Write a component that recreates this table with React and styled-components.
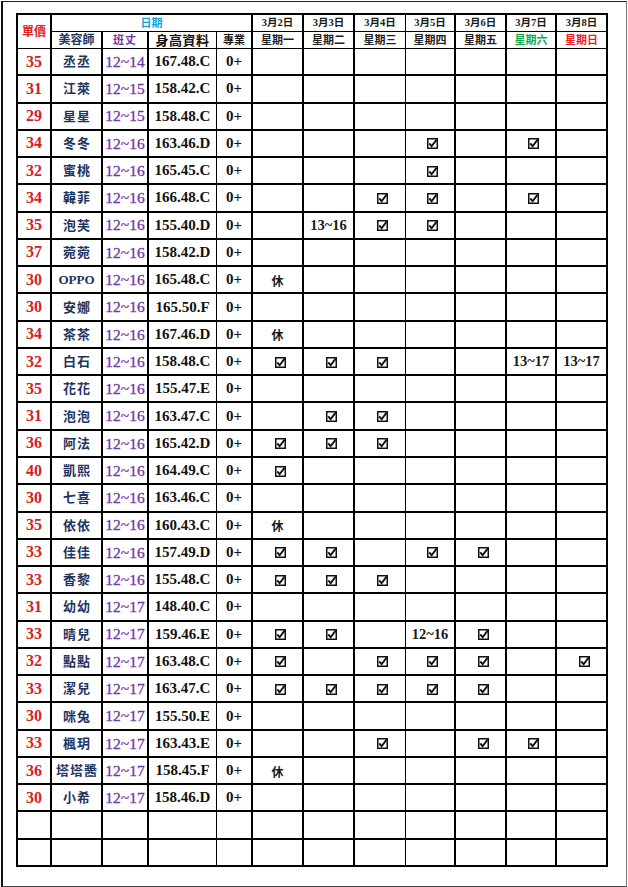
import React from 'react';
import styled, { createGlobalStyle } from 'styled-components';

const GlobalStyle = createGlobalStyle`
  html, body { margin: 0; padding: 0; background: #fff; }
  body { font-family: "Liberation Serif", "Noto Sans CJK TC", serif; }
`;

const Frame = styled.div`
  box-sizing: border-box;
  width: 626px;
  height: 886px;
  margin: 1px 0 0 1px;
  border-top: 1px solid #222;
  border-left: 2px solid #111;
  border-right: 1px solid #777;
  border-bottom: 1px solid #444;
  padding: 11px 0 0 13px;
`;

const Sheet = styled.div`
  display: grid;
  box-sizing: border-box;
  width: 592px;
  grid-template-columns: 34px 51px 46px 68px 36px 51px 51px 51px 50px 51px 50px 51px;
  grid-template-rows: 17px 17px;
  grid-auto-rows: 27.27px;
  border-top: 2px solid #000;
  border-left: 2px solid #000;
`;

const Cell = styled.div`
  box-sizing: border-box;
  display: flex;
  align-items: center;
  justify-content: center;
  min-width: 0;
  overflow: hidden;
  white-space: nowrap;
  border-right: ${(p) => p.$r}px solid #000;
  border-bottom: ${(p) => p.$b}px solid #000;
  grid-column: ${(p) => (p.$span ? `span ${p.$span}` : 'auto')};
  grid-row: ${(p) => (p.$rows ? `span ${p.$rows}` : 'auto')};
`;

const HeadLabel = styled.span`
  font-family: "Liberation Serif", "Noto Sans CJK TC", serif;
  font-weight: 700;
  font-size: ${(p) => p.$size || 11}px;
  color: ${(p) => p.$color || '#1a1a1a'};
  line-height: 1;
  letter-spacing: ${(p) => p.$ls || 0}px;
`;

const Price = styled.span`
  font-family: "Liberation Serif", serif;
  font-weight: 700;
  font-size: 16px;
  color: #d6201f;
  line-height: 1;
`;

const Name = styled.span`
  font-family: "Liberation Serif", "Noto Sans CJK TC", serif;
  font-weight: 700;
  font-size: 13px;
  letter-spacing: ${(p) => (p.$latin ? 0 : 1)}px;
  margin-left: ${(p) => (p.$latin ? 0 : 1)}px;
  color: #1f3561;
  line-height: 1;
`;

const Shift = styled.span`
  font-family: "Liberation Serif", serif;
  font-weight: 400;
  font-size: 15.5px;
  color: #7536a4;
  line-height: 1;
  -webkit-text-stroke: 0.3px #7536a4;
`;

const Measure = styled.span`
  font-family: "Liberation Serif", serif;
  font-weight: 700;
  font-size: 15px;
  color: #111;
  line-height: 1;
`;

const Level = styled.span`
  font-family: "Liberation Serif", serif;
  font-weight: 700;
  font-size: 15px;
  color: #111;
  line-height: 1;
`;

const Note = styled.span`
  font-family: "Liberation Serif", serif;
  font-weight: 700;
  font-size: 14.5px;
  color: #1a1a1a;
  line-height: 1;
`;

const Rest = styled.span`
  font-family: "Noto Sans CJK TC", sans-serif;
  font-weight: 700;
  font-size: 12px;
  color: #1a1a1a;
  line-height: 1;
  margin-top: 2px;
`;

const CheckIcon = styled.svg`
  display: block;
  width: 11px;
  height: 11px;
  margin-left: 5px;
  margin-top: 1px;
`;

const CheckBox = () => (
  <CheckIcon viewBox="0 0 11 11">
    <rect x="0.75" y="0.75" width="9.5" height="9.5" fill="none" stroke="#111" strokeWidth="1.5" />
    <path d="M2.3 5.4 L4.6 8.3 L9.6 1.6" fill="none" stroke="#111" strokeWidth="1.9" strokeLinejoin="miter" />
  </CheckIcon>
);

const colRight = [2, 2, 2, 1, 2, 2, 2, 1, 2, 2, 2, 2];

const V = 'v';
const R = '休';

const days = [
  { d: '3月2日', w: '星期一', c: '#222' },
  { d: '3月3日', w: '星期二', c: '#222' },
  { d: '3月4日', w: '星期三', c: '#222' },
  { d: '3月5日', w: '星期四', c: '#222' },
  { d: '3月6日', w: '星期五', c: '#222' },
  { d: '3月7日', w: '星期六', c: '#13a64b' },
  { d: '3月8日', w: '星期日', c: '#ec1c24' },
];

const rows = [
  [35, '丞丞', '12~14', '167.48.C', []],
  [31, '江萊', '12~15', '158.42.C', []],
  [29, '星星', '12~15', '158.48.C', []],
  [34, '冬冬', '12~16', '163.46.D', ['', '', '', V, '', V, '']],
  [32, '蜜桃', '12~16', '165.45.C', ['', '', '', V]],
  [34, '韓菲', '12~16', '166.48.C', ['', '', V, V, '', V]],
  [35, '泡芙', '12~16', '155.40.D', ['', '13~16', V, V]],
  [37, '菀菀', '12~16', '158.42.D', []],
  [30, 'OPPO', '12~16', '165.48.C', [R]],
  [30, '安娜', '12~16', '165.50.F', []],
  [34, '茶茶', '12~16', '167.46.D', [R]],
  [32, '白石', '12~16', '158.48.C', [V, V, V, '', '', '13~17', '13~17']],
  [35, '花花', '12~16', '155.47.E', []],
  [31, '泡泡', '12~16', '163.47.C', ['', V, V]],
  [36, '阿法', '12~16', '165.42.D', [V, V, V]],
  [40, '凱熙', '12~16', '164.49.C', [V]],
  [30, '七喜', '12~16', '163.46.C', []],
  [35, '依依', '12~16', '160.43.C', [R]],
  [33, '佳佳', '12~16', '157.49.D', [V, V, '', V, V]],
  [33, '香黎', '12~16', '155.48.C', [V, V, V]],
  [31, '幼幼', '12~17', '148.40.C', []],
  [33, '晴兒', '12~17', '159.46.E', [V, V, '', '12~16', V]],
  [32, '點點', '12~17', '163.48.C', [V, '', V, V, V, '', V]],
  [33, '潔兒', '12~17', '163.47.C', [V, V, V, V, V]],
  [30, '咪兔', '12~17', '155.50.E', []],
  [33, '楓玥', '12~17', '163.43.E', ['', '', V, '', V, V]],
  [36, '塔塔醬', '12~17', '158.45.F', [R]],
  [30, '小希', '12~17', '158.46.D', []],
  null,
  null,
];

const Mark = ({ value }) => {
  if (!value) return null;
  if (value === V) return <CheckBox />;
  if (value === R) return <Rest>休</Rest>;
  return <Note>{value}</Note>;
};

export default function App() {
  return (
    <>
      <GlobalStyle />
      <Frame>
        <Sheet>
          <Cell $r={2} $b={1} $rows={2}>
            <HeadLabel $size={12} $color="#e0211f">單價</HeadLabel>
          </Cell>
          <Cell $r={2} $b={1} $span={4}>
            <HeadLabel $size={11} $color="#1b9fd8">日期</HeadLabel>
          </Cell>
          {days.map((day, i) => (
            <Cell key={`d${i}`} $r={colRight[5 + i]} $b={1}>
              <HeadLabel $size={10.5}>{day.d}</HeadLabel>
            </Cell>
          ))}
          <Cell $r={colRight[1]} $b={1}>
            <HeadLabel $size={12} $color="#1f3561">美容師</HeadLabel>
          </Cell>
          <Cell $r={colRight[2]} $b={1}>
            <HeadLabel $size={11} $color="#7030a0" $ls={1}>班丈</HeadLabel>
          </Cell>
          <Cell $r={colRight[3]} $b={1}>
            <HeadLabel $size={13} $color="#111" $ls={0.5}>身高資料</HeadLabel>
          </Cell>
          <Cell $r={colRight[4]} $b={1}>
            <HeadLabel $size={11} $color="#111">專業</HeadLabel>
          </Cell>
          {days.map((day, i) => (
            <Cell key={`w${i}`} $r={colRight[5 + i]} $b={1}>
              <HeadLabel $size={11} $color={day.c}>{day.w}</HeadLabel>
            </Cell>
          ))}

          {rows.map((row, ri) => {
            if (!row) {
              return colRight.map((r, ci) => <Cell key={`e${ri}-${ci}`} $r={r} $b={2} />);
            }
            const [price, name, shift, measure, marks] = row;
            return (
              <React.Fragment key={`r${ri}`}>
                <Cell $r={colRight[0]} $b={2}>
                  <Price>{price}</Price>
                </Cell>
                <Cell $r={colRight[1]} $b={2}>
                  <Name $latin={/^[A-Za-z]+$/.test(name)}>{name}</Name>
                </Cell>
                <Cell $r={colRight[2]} $b={2}>
                  <Shift>{shift}</Shift>
                </Cell>
                <Cell $r={colRight[3]} $b={2}>
                  <Measure>{measure}</Measure>
                </Cell>
                <Cell $r={colRight[4]} $b={2}>
                  <Level>0+</Level>
                </Cell>
                {days.map((_, di) => (
                  <Cell key={`m${di}`} $r={colRight[5 + di]} $b={2}>
                    <Mark value={marks[di]} />
                  </Cell>
                ))}
              </React.Fragment>
            );
          })}
        </Sheet>
      </Frame>
    </>
  );
}
